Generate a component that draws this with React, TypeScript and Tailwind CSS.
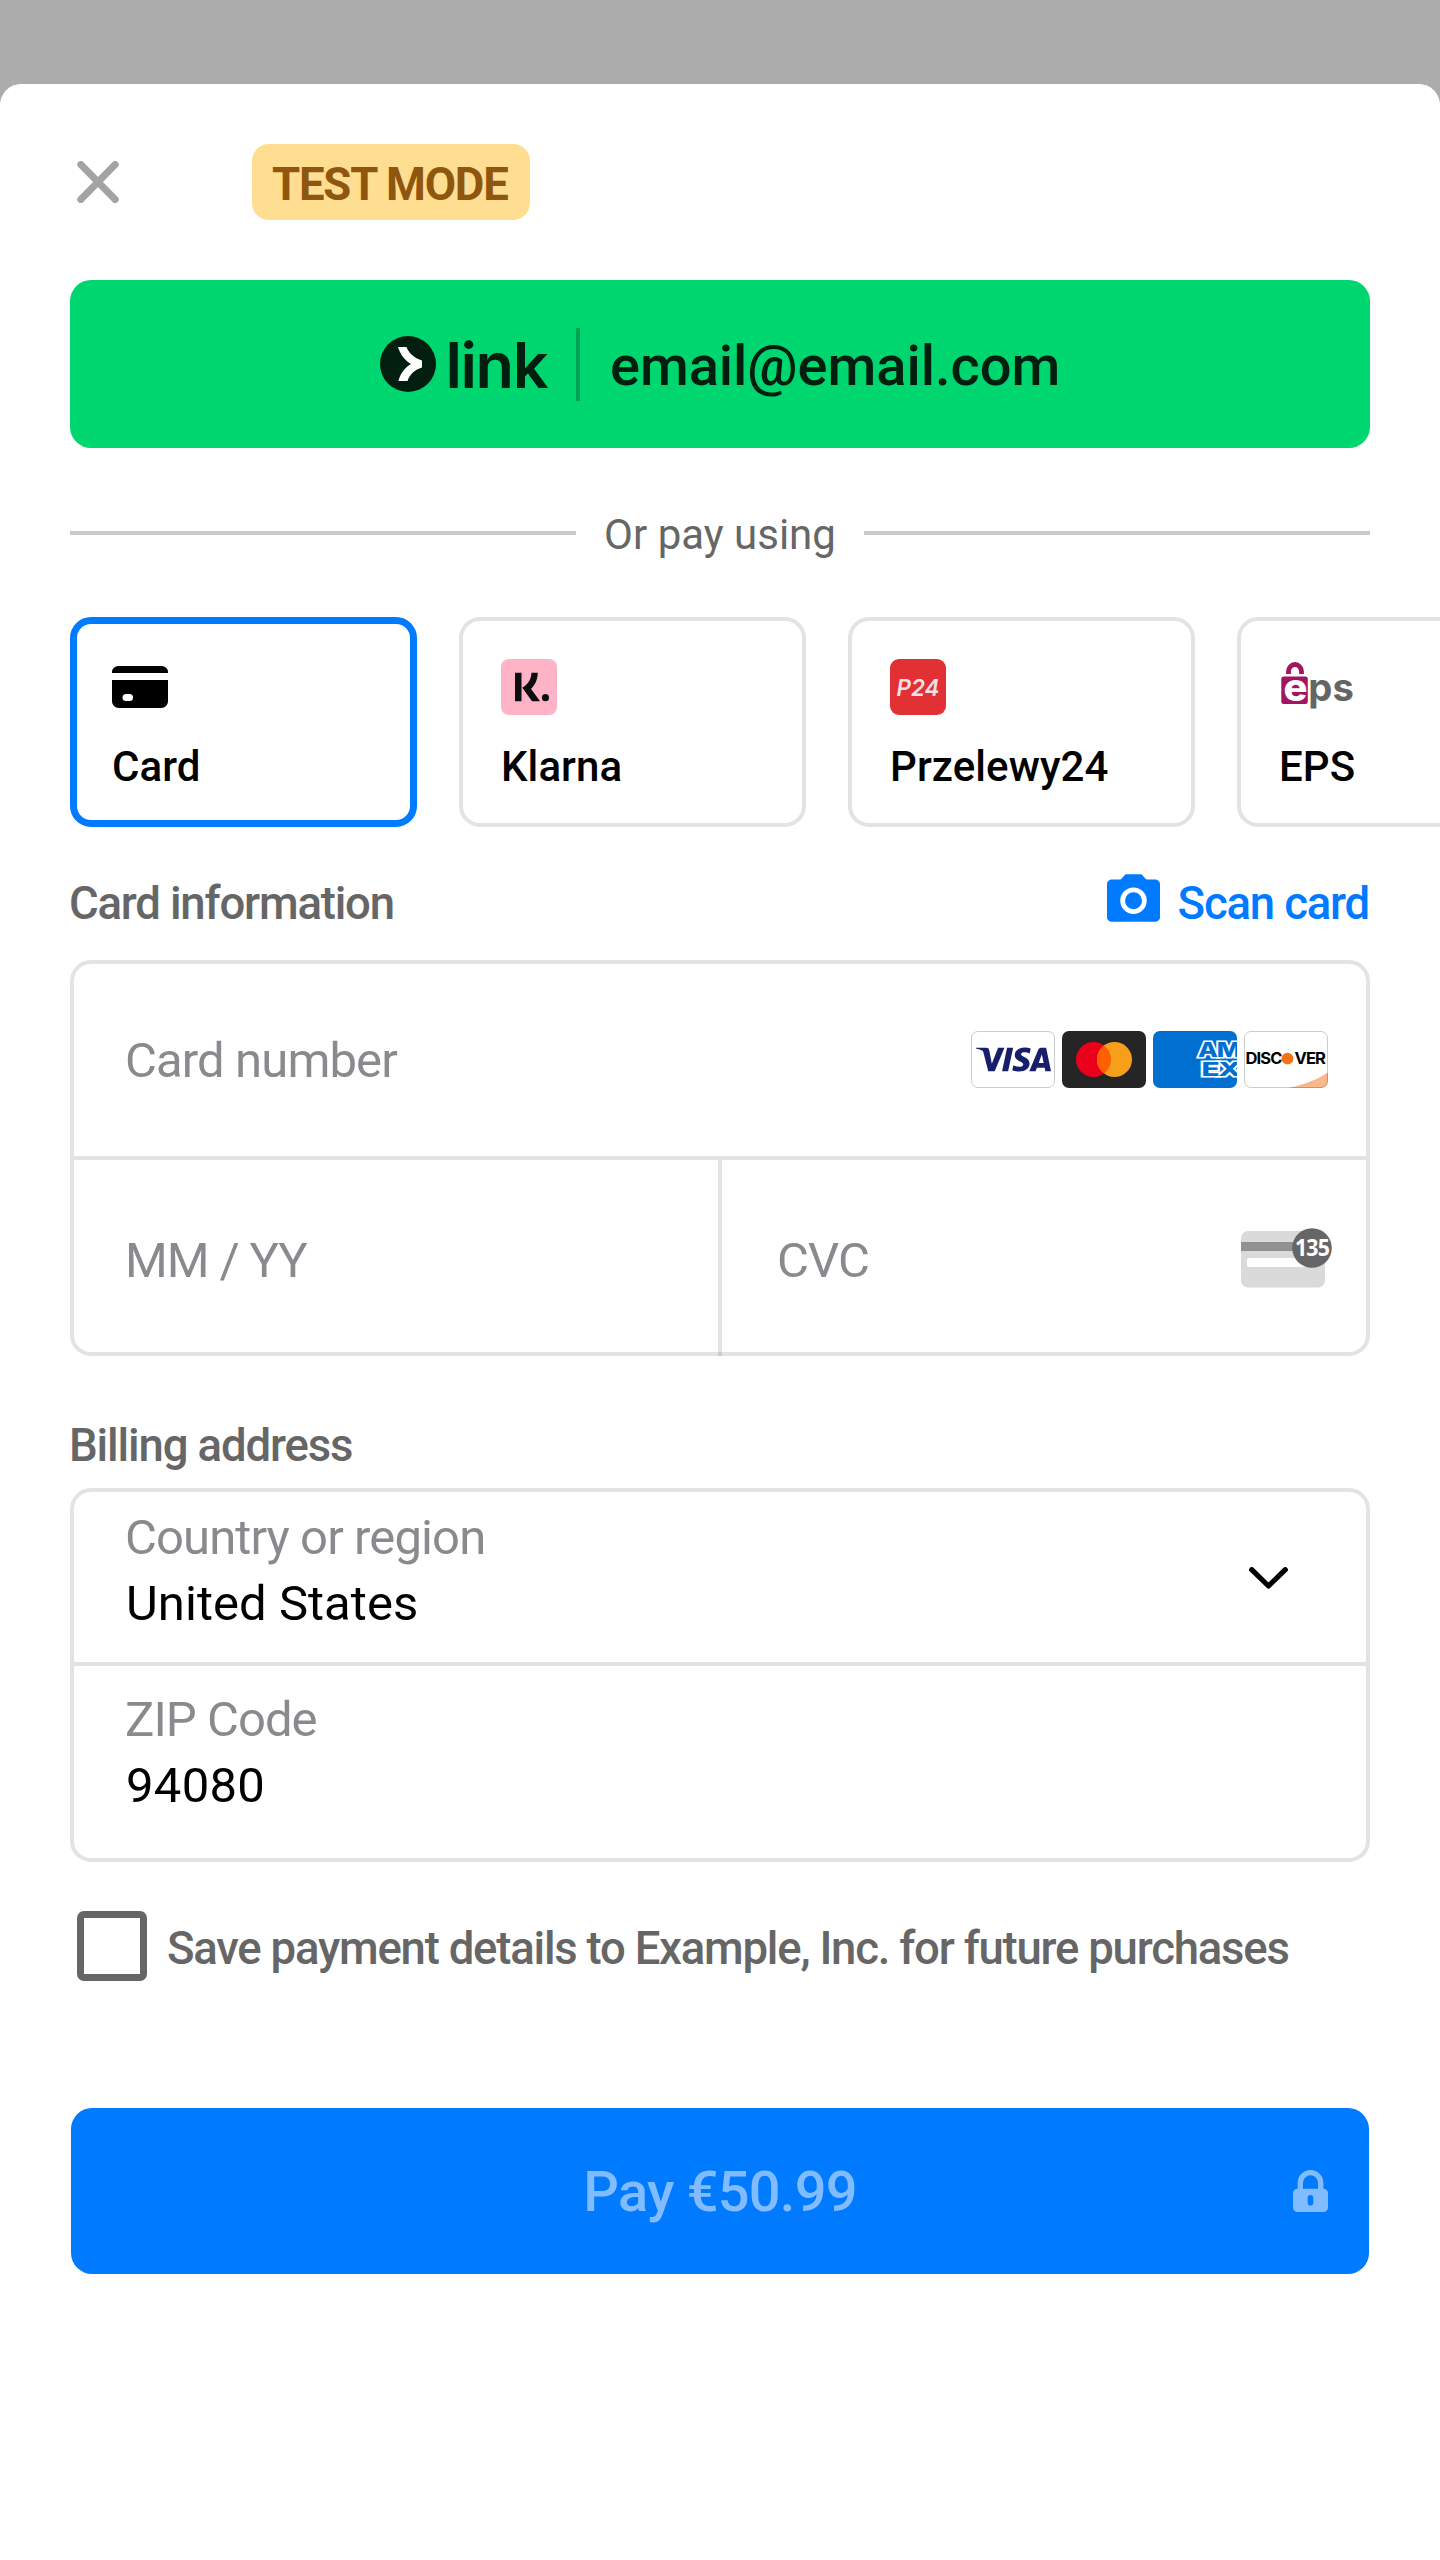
import type { ReactNode } from "react";
import { SiKlarna, SiVisa } from "react-icons/si";

function LinkLogo() {
  return (
    <svg width="170" height="56" viewBox="0 0 170 56" className="shrink-0 overflow-visible">
      <circle cx="28" cy="28" r="28" fill="#011e0f" />
      <path
        d="M18 11H26.5C28.5 17 35 22.5 42 24.5V31.5C35 33.5 29.5 38.5 27.5 45H18.5C20 38 24.5 32 31 28C24.5 24 20 18 18 11Z"
        fill="#fff"
      />
      <text
        x="65.500"
        y="51.500"
        textLength="103"
        fontFamily="Inter, sans-serif"
        fontWeight="600"
        fontSize="63"
        fill="#011e0f"
      >
        link
      </text>
    </svg>
  );
}

function CardIcon() {
  return (
    <svg width="56" height="56" viewBox="0 0 56 56">
      <path d="M0 14V13C0 9.5 3 7 7 7H49C53 7 56 9.5 56 13V14Z" />
      <path d="M0 21H56V42C56 46 53 49 49 49H7C3 49 0 46 0 42Z" />
      <rect x="10.5" y="35" width="10.5" height="7" rx="3.5" fill="#fff" />
    </svg>
  );
}

function KlarnaIcon() {
  return (
    <div className="flex size-14 items-center justify-end rounded-[8px] bg-[#ffb3c7] pr-2">
      <SiKlarna size={34} color="#0d0d0f" />
    </div>
  );
}

function P24Icon() {
  return (
    <svg width="56" height="56" viewBox="0 0 56 56">
      <rect width="56" height="56" rx="9" fill="#e13135" />
      <text
        x="6.5"
        y="37"
        textLength="43"
        lengthAdjust="spacingAndGlyphs"
        fontFamily="Inter, sans-serif"
        fontStyle="italic"
        fontWeight="600"
        fontSize="23"
        fill="#f1dfe4"
      >
        P24
      </text>
    </svg>
  );
}

function EpsIcon() {
  return (
    <svg width="76" height="56" viewBox="0 0 76 56">
      <path d="M9.500 15V12.500A6.500 7 0 0 1 22.500 12.500V15" fill="none" stroke="#a5145f" strokeWidth="4.800" />
      <rect x="2.300" y="17.500" width="26.500" height="27.500" rx="2.500" fill="#a5145f" />
      <text x="4.500" y="41.500" textLength="24" lengthAdjust="spacingAndGlyphs" fontFamily="Inter, sans-serif" fontWeight="800" fontSize="38" fill="#fff">
        e
      </text>
      <text x="29.300" y="41.500" textLength="45.500" lengthAdjust="spacingAndGlyphs" fontFamily="Inter, sans-serif" fontWeight="700" fontSize="39" fill="#646663">
        ps
      </text>
    </svg>
  );
}

function CameraIcon() {
  return (
    <svg width="53" height="48" viewBox="2 2 20 18" className="mb-[11px]">
      <path
        fill="#007aff"
        fillRule="evenodd"
        d="M9 2L7.170 4H4C2.900 4 2 4.700 2 5.700V18.300C2 19.300 2.900 20 4 20H20C21.100 20 22 19.300 22 18.300V5.700C22 4.700 21.100 4 20 4H16.830L15 2ZM12 7A5 5 0 1 0 12 17A5 5 0 1 0 12 7Z"
      />
      <circle cx="12" cy="12" r="3.200" fill="#007aff" />
    </svg>
  );
}

function Brands() {
  return (
    <div className="mb-px flex gap-[7px]">
      <div className="flex h-[57px] w-[84px] items-center justify-center rounded-[7px] border border-[#cccccc] bg-white">
        <SiVisa size={75} color="#171e6c" />
      </div>
      <svg width="84" height="57" viewBox="0 0 84 57">
        <rect width="84" height="57" rx="7" fill="#252525" />
        <circle cx="31.500" cy="28.500" r="17.500" fill="#eb001b" />
        <circle cx="52.500" cy="28.500" r="17.500" fill="#f79e1b" />
        <path d="M42 14.500A17.500 17.500 0 0 1 42 42.500A17.500 17.500 0 0 1 42 14.500Z" fill="#ff5f00" />
      </svg>
      <svg width="84" height="57" viewBox="0 0 84 57">
        <clipPath id="amex-card">
          <rect width="84" height="57" rx="7" />
        </clipPath>
        <g clipPath="url(#amex-card)">
          <rect width="84" height="57" fill="#016fd0" />
          <g
            fontFamily="Inter, sans-serif"
            fontWeight="800"
            fill="#016fd0"
            stroke="#fff"
            strokeWidth="3.200"
            paintOrder="stroke"
          >
            <text x="45" y="26.300" fontSize="20.500" textLength="42" lengthAdjust="spacingAndGlyphs">
              AM
            </text>
            <text x="48.500" y="45.300" fontSize="19" textLength="38" lengthAdjust="spacingAndGlyphs">
              EX
            </text>
          </g>
        </g>
      </svg>
      <svg width="84" height="57" viewBox="0 0 84 57">
        <clipPath id="discover-card">
          <rect width="84" height="57" rx="7" />
        </clipPath>
        <g clipPath="url(#discover-card)">
          <rect width="84" height="57" fill="#fff" />
          <path d="M44 57C60 54 73 48.500 84 41.500V57Z" fill="#f9b88a" />
        </g>
        <rect x=".5" y=".5" width="83" height="56" rx="6.500" fill="none" stroke="#000" strokeOpacity=".2" />
        <g fontFamily="Inter, sans-serif" fontWeight="700" fontSize="16">
          <text x="1.500" y="33.300" textLength="36" lengthAdjust="spacingAndGlyphs">
            DISC
          </text>
          <text x="50.500" y="33.300" textLength="30.500" lengthAdjust="spacingAndGlyphs">
            VER
          </text>
        </g>
        <circle cx="43.500" cy="27.700" r="5.900" fill="#f47216" />
      </svg>
    </div>
  );
}

function CvcIcon() {
  return (
    <svg width="91" height="60" viewBox="0 0 91 60" className="mb-1">
      <rect y="3" width="84" height="56.500" rx="7" fill="#dadada" />
      <rect y="14" width="84" height="9" fill="#919191" />
      <rect x="6" y="30" width="68" height="9" rx="2.500" fill="#fff" />
      <circle cx="71" cy="20" r="19.800" fill="#666" />
      <text
        x="54"
        y="28"
        textLength="34"
        lengthAdjust="spacingAndGlyphs"
        fontFamily="Noto Sans, sans-serif"
        fontWeight="700"
        fontSize="22.500"
        fill="#fff"
      >
        135
      </text>
    </svg>
  );
}

function LockIcon() {
  return (
    <svg width="35" height="42" viewBox="0 0 35 42">
      <path d="M7.300 21V13A10.200 10.400 0 0 1 27.700 13V21" fill="none" stroke="#80bcff" strokeWidth="5.400" />
      <rect y="18.700" width="35" height="23.300" rx="4.500" fill="#80bcff" />
      <rect x="14.700" y="25" width="5.600" height="10.500" rx="2.800" fill="#007aff" />
    </svg>
  );
}

function MethodTile({ icon, label, selected = false }: { icon: ReactNode; label: string; selected?: boolean }) {
  return (
    <div
      className={
        selected
          ? "h-[210px] w-[347px] shrink-0 rounded-[21px] border-[7px] border-[#007aff] p-[35px]"
          : "h-[210px] w-[347px] shrink-0 rounded-[21px] border-4 border-[#e3e3e5] p-[38px]"
      }
    >
      <div className="h-14">{icon}</div>
      <div className="mt-[27px] text-[42px] leading-[50px] font-medium tracking-[0.080px]">{label}</div>
    </div>
  );
}

export default function App() {
  return (
    <div className="h-[2560px] w-[1440px] overflow-hidden bg-[#acacac] pt-[84px] font-['Roboto',sans-serif] text-black">
      <div className="h-[2476px] rounded-t-[21px] bg-white px-[70px] pt-[60px]">
        <div className="flex h-[76px] items-center">
          <svg width="42" height="42" viewBox="0 0 42 42" className="ml-[7px]">
            <path d="M3.800 3.500L38.200 38.500M38.200 3.500L3.800 38.500" stroke="#a3a3a3" strokeWidth="7" strokeLinecap="round" />
          </svg>
          <div className="ml-[133px] h-[76px] w-[278px] rounded-[17px] bg-[#ffde92] pt-[5px] pl-5 text-[45.500px] leading-[71px] font-bold tracking-[-1.220px] whitespace-nowrap text-[#8f560f]">
            TEST MODE
          </div>
        </div>

        <div className="mt-[60px] flex h-[168px] items-center rounded-[21px] bg-[#00d66f] pl-[310px]">
          <LinkLogo />
          <div className="ml-[26px] h-[73px] w-1 bg-[#00a355]" />
          <span className="ml-[30px] pt-[4px] text-[56px] leading-[66px] font-medium tracking-[-0.030px] text-[#011e0f]">
            email@email.com
          </span>
        </div>

        <div className="flex h-[169px] items-center justify-between">
          <div className="mt-px h-1 w-[506px] bg-[#c9c9c9]" />
          <span className="pt-[4px] text-[42px] leading-[60px] whitespace-nowrap text-[#666666]">Or pay using</span>
          <div className="mt-px h-1 w-[506px] bg-[#c9c9c9]" />
        </div>

        <div className="mr-[-70px] flex gap-[42px] overflow-hidden">
          <MethodTile icon={<CardIcon />} label="Card" selected />
          <MethodTile icon={<KlarnaIcon />} label="Klarna" />
          <MethodTile icon={<P24Icon />} label="Przelewy24" />
          <MethodTile icon={<EpsIcon />} label="EPS" />
        </div>

        <div className="mr-px -ml-px flex h-[133px] items-center justify-between pt-5 text-[45.500px] leading-[60px] font-medium tracking-[-1.180px]">
          <span className="text-[#666666]">Card information</span>
          <div className="flex items-center gap-[18px] text-[#007aff]">
            <CameraIcon />
            <span>Scan card</span>
          </div>
        </div>

        <div className="rounded-[21px] border-4 border-[#e3e3e5] text-[49px] leading-[66px] tracking-[-0.880px] text-[#8a8a8e]">
          <div className="flex h-48 items-center justify-between pr-[38px] pl-[51px]">
            <span className="pt-0.5">Card number</span>
            <Brands />
          </div>
          <div className="h-1 bg-[#e3e3e5]" />
          <div className="flex h-48">
            <div className="flex w-[644px] items-center pt-2.5 pl-[51px] tracking-[-1.100px]">MM / YY</div>
            <div className="relative w-1 bg-[#e3e3e5]">
              <div className="absolute -bottom-1 left-0 size-1 bg-[#cdcdcf]" />
            </div>
            <div className="flex flex-1 items-center justify-between pt-2 pr-[34px] pl-[55px]">
              <span className="pt-0.5">CVC</span>
              <CvcIcon />
            </div>
          </div>
        </div>

        <div className="-ml-px flex h-[132px] items-center pt-[47px] text-[45.500px] leading-[60px] font-medium tracking-[-1.120px] text-[#666666]">
          Billing address
        </div>

        <div className="rounded-[21px] border-4 border-[#e3e3e5] text-[49px] leading-[66px]">
          <div className="flex h-[170px] items-start justify-between pt-[13px] pr-[78px] pl-[51px]">
            <div>
              <div className="tracking-[-0.900px] text-[#8a8a8e]">Country or region</div>
              <div className="pl-px tracking-[0.050px]">United States</div>
            </div>
            <svg width="39" height="22" viewBox="0 0 39 22" className="mt-[62px]">
              <path d="M2.700 2.700L19.500 19L36.300 2.700" fill="none" stroke="#000" strokeWidth="5.200" strokeLinecap="round" strokeLinejoin="round" />
            </svg>
          </div>
          <div className="h-1 bg-[#e3e3e5]" />
          <div className="h-48 pt-[21px] pl-[51px]">
            <div className="tracking-[-0.950px] text-[#8a8a8e]">ZIP Code</div>
            <div className="pl-px tracking-[0.300px]">94080</div>
          </div>
        </div>

        <div className="mt-[49px] flex items-center gap-5 pl-[7px]">
          <div className="size-[70px] shrink-0 rounded-[7px] border-[7px] border-[#666666]" />
          <span className="pt-[5px] text-[45.500px] leading-[60px] font-medium tracking-[-1.220px] whitespace-nowrap text-[#666666]">
            Save payment details to Example, Inc. for future purchases
          </span>
        </div>

        <div className="mx-px mt-[127px] flex h-[166px] items-center rounded-[21px] bg-[#007aff] px-[41px]">
          <div className="w-[35px]" />
          <div className="flex-1 pt-px text-center text-[56px] leading-[66px] font-medium tracking-[-0.780px] text-[#80bcff]">Pay €50.99</div>
          <LockIcon />
        </div>
      </div>
    </div>
  );
}
